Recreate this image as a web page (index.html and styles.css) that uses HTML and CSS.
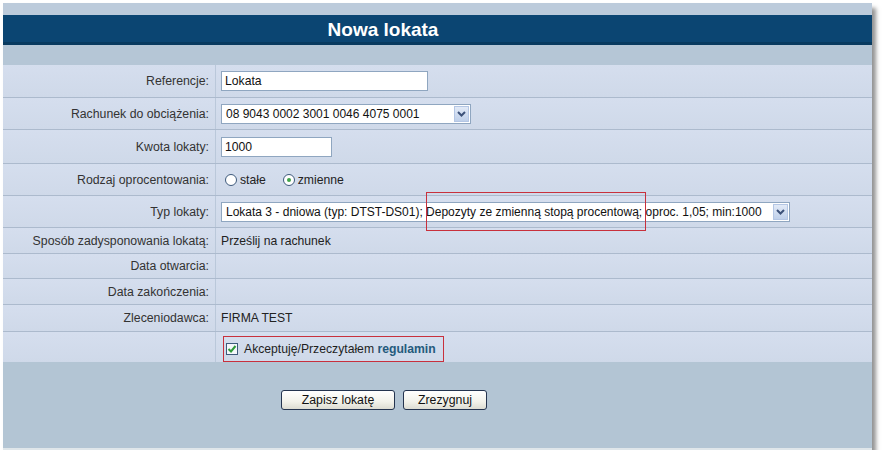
FILE: index.html
```html
<!DOCTYPE html>
<html lang="pl">
<head>
<meta charset="utf-8">
<title>Nowa lokata</title>
<link rel="stylesheet" href="styles.css">
</head>
<body>
<div class="panel">
  <div class="topband"></div>
  <div class="header"><h1 class="title">Nowa lokata</h1></div>
  <div class="subband"></div>
  <div class="rows">
    <div class="row h33">
      <div class="lbl">Referencje:</div>
      <div class="val"><div class="input w-ref">Lokata</div></div>
    </div>
    <div class="row h32">
      <div class="lbl">Rachunek do obciążenia:</div>
      <div class="val">
        <div class="select w-acc"><span class="sel-text">08 9043 0002 3001 0046 4075 0001</span><span class="arrow"><svg width="9" height="6" viewBox="0 0 9 6"><path d="M1 1 L4.5 4.5 L8 1" fill="none" stroke="#3d527a" stroke-width="2"/></svg></span></div>
      </div>
    </div>
    <div class="row h34">
      <div class="lbl">Kwota lokaty:</div>
      <div class="val"><div class="input w-amt">1000</div></div>
    </div>
    <div class="row h32">
      <div class="lbl">Rodzaj oprocentowania:</div>
      <div class="val">
        <div class="radios">
          <span class="radio-opt"><span class="radio"></span>stałe</span>
          <span class="radio-opt"><span class="radio checked"><span class="dot"></span></span>zmienne</span>
        </div>
      </div>
    </div>
    <div class="row h32">
      <div class="lbl">Typ lokaty:</div>
      <div class="val rel">
        <div class="select w-typ"><span class="sel-text">Lokata 3 - dniowa (typ: DTST-DS01); Depozyty ze zmienną stopą procentową; oproc. 1,05; min:1000</span><span class="arrow"><svg width="9" height="6" viewBox="0 0 9 6"><path d="M1 1 L4.5 4.5 L8 1" fill="none" stroke="#3d527a" stroke-width="2"/></svg></span></div>
        <div class="highlight"></div>
      </div>
    </div>
    <div class="row h26">
      <div class="lbl">Sposób zadysponowania lokatą:</div>
      <div class="val">Prześlij na rachunek</div>
    </div>
    <div class="row h25">
      <div class="lbl">Data otwarcia:</div>
      <div class="val"></div>
    </div>
    <div class="row h26">
      <div class="lbl">Data zakończenia:</div>
      <div class="val"></div>
    </div>
    <div class="row h27">
      <div class="lbl">Zleceniodawca:</div>
      <div class="val">FIRMA TEST</div>
    </div>
    <div class="row h30 last">
      <div class="lbl"></div>
      <div class="val">
        <div class="accept">
          <span class="checkbox"><svg width="10" height="10" viewBox="0 0 10 10"><path d="M1.5 5 L4 7.5 L8.5 2" fill="none" stroke="#2f9a3a" stroke-width="2"/></svg></span>
          <span>Akceptuję/Przeczytałem <b class="link">regulamin</b></span>
        </div>
      </div>
    </div>
  </div>
  <div class="footer">
    <button class="btn btn-save">Zapisz lokatę</button>
    <button class="btn btn-cancel">Zrezygnuj</button>
  </div>
</div>
</body>
</html>
```

FILE: styles.css
```css
html, body {
  margin: 0;
  padding: 0;
  background: #ffffff;
}
body {
  font-family: "Liberation Sans", Arial, sans-serif;
  font-size: 12px;
  color: #222;
}
.panel {
  margin: 3px 0 0 3px;
  width: 869px;
  background: #d0daea;
  box-shadow: 4px 5px 4px rgba(60, 60, 60, 0.55);
}
.topband {
  height: 12px;
  background: #bccbdb;
}
.header {
  height: 30px;
  box-sizing: border-box;
  background: #0b4572;
  border-bottom: 3px solid #083a5f;
  display: flex;
  align-items: center;
  justify-content: center;
  padding-right: 109px;
}
.title {
  margin: 0;
  font-size: 19px;
  font-weight: bold;
  color: #ffffff;
  line-height: 1;
  padding-top: 2px;
}
.subband {
  height: 20px;
  background: #b5c6d6;
}
.rows {
  display: flex;
  flex-direction: column;
}
.row {
  display: grid;
  grid-template-columns: 213px 1fr;
  box-sizing: border-box;
  border-bottom: 1px solid #acbacd;
  background: linear-gradient(#d5deee, #cfd9e9);
}
.row.last {
  border-bottom: none;
}
.h33 { height: 33px; }
.h32 { height: 32px; }
.h34 { height: 34px; }
.h30 { height: 30px; }
.h27 { height: 27px; }
.h26 { height: 26px; }
.h25 { height: 25px; }
.lbl {
  border-right: 1px solid #bac8da;
  text-align: right;
  padding-right: 6px;
  display: flex;
  align-items: center;
  justify-content: flex-end;
  color: #333333;
  font-size: 12.3px;
}
.val {
  padding-left: 5px;
  display: flex;
  align-items: center;
  color: #222222;
  font-size: 12.2px;
}
.rel {
  position: relative;
}
.input {
  box-sizing: border-box;
  height: 20px;
  background: #ffffff;
  border: 1px solid #8fa6c0;
  padding: 0 3px;
  display: flex;
  align-items: center;
  color: #111;
}
.w-ref { width: 207px; }
.w-amt { width: 111px; }
.select {
  box-sizing: border-box;
  height: 20px;
  background: #ffffff;
  border: 1px solid #8fa6c0;
  display: flex;
  align-items: stretch;
  color: #111;
  font-size: 12px;
}
.w-acc { width: 250px; }
.w-typ { width: 569px; }
.sel-text {
  flex: 1;
  padding-left: 4px;
  display: flex;
  align-items: center;
  white-space: nowrap;
  overflow: hidden;
}
.arrow {
  width: 15px;
  margin: 1px;
  box-sizing: border-box;
  border: 1px solid #b4c6e4;
  background: linear-gradient(#e2eaf7, #bfd0ea);
  display: flex;
  align-items: center;
  justify-content: center;
}
.highlight {
  position: absolute;
  left: 210px;
  top: -4px;
  width: 220px;
  height: 39px;
  box-sizing: border-box;
  border: 1px solid #c8303c;
}
.radios {
  display: flex;
  align-items: center;
  margin-left: 4px;
  gap: 17px;
}
.radio-opt {
  display: flex;
  align-items: center;
}
.radio {
  width: 12px;
  height: 12px;
  box-sizing: border-box;
  border: 1px solid #3e5a7c;
  border-radius: 50%;
  background: #ffffff;
  margin-right: 3px;
  display: flex;
  align-items: center;
  justify-content: center;
}
.dot {
  width: 4px;
  height: 4px;
  border-radius: 50%;
  background: #3fa34a;
}
.accept {
  margin-left: 2px;
  margin-top: 3px;
  width: 221px;
  height: 26px;
  box-sizing: border-box;
  border: 1px solid #c8303c;
  display: flex;
  align-items: center;
  padding-left: 2px;
  gap: 6px;
  color: #1e1e1e;
}
.checkbox {
  width: 12px;
  height: 12px;
  box-sizing: border-box;
  border: 1px solid #3e5a7c;
  background: #f4f7fb;
  display: flex;
  align-items: center;
  justify-content: center;
}
.link {
  color: #245a7c;
  font-weight: bold;
}
.footer {
  background: #b3c5d4;
  border-bottom: 2px solid #dfe6ea;
  display: flex;
  align-items: flex-start;
  justify-content: center;
  gap: 8px;
  padding-top: 28px;
  padding-right: 107px;
  box-sizing: content-box;
  height: 58px;
}
.btn {
  font-family: "Liberation Sans", Arial, sans-serif;
  font-size: 12.3px;
  color: #111;
  height: 20px;
  box-sizing: border-box;
  border: 1px solid #24344f;
  border-radius: 3px;
  background: linear-gradient(#ffffff, #f2f2ea 60%, #dcdcd2);
  padding: 0;
  margin: 0;
  display: flex;
  align-items: center;
  justify-content: center;
}
.btn-save { width: 114px; }
.btn-cancel { width: 84px; }
```
